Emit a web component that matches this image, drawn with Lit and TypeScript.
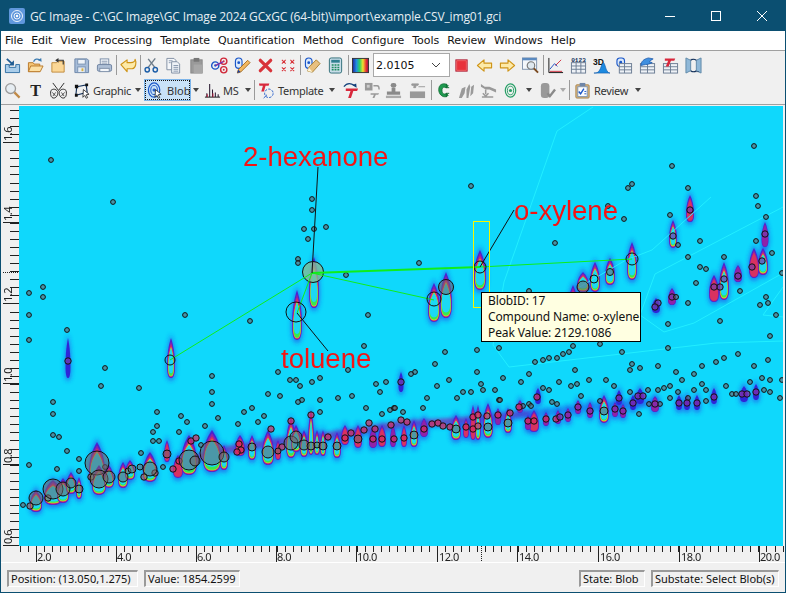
import { LitElement, html, css, svg } from 'lit';
import { customElement } from 'lit/decorators.js';

const pairs = (s: string) => {
  const n = s.trim().split(/[\s,]+/).map(Number);
  const out: number[][] = [];
  for (let i = 0; i < n.length; i += 2) out.push([n[i], n[i + 1]]);
  return out;
};

// small peak markers, page coordinates
const SMALL = pairs(`51,160 113,202 312,199 312,210 304,229 314,229 326,227 308,239 298,259 298,263 346,275 43,287 29,293 43,297 29,315 185,315 250,321 368,315 67,330 29,340 364,346 105,368 348,370 278,372 212,376 290,380 296,380 312,382 320,378 101,386 300,386 139,388 376,384 386,382 380,392 212,392 268,394 280,396 338,398 352,396 302,400 320,400 298,402
754,146 672,166 471,186 632,184 628,188 688,188 756,196 758,206 608,206 670,215 624,219 766,217 555,243 700,241 756,241 678,245 419,263 772,253 688,257 724,257 700,267 706,269 782,273 696,283 740,291 529,291 766,297 688,303 768,303 760,305 776,315 668,324 720,321 770,336 600,344 573,346 569,352 563,354 499,348 477,350 445,352 557,358 549,358 543,360 535,362 435,364 622,352 668,348 738,354 768,360 724,358 716,362 702,366 632,364 630,370 640,368 658,366 754,366 575,370 676,372 694,374 415,372 411,374 477,372 529,374 503,378 449,380 521,382 559,382 589,380 606,380 682,380 762,378 770,380 750,382 782,380 437,386 481,384 571,386 577,384 614,386 670,386 664,388 702,384 726,386 658,390 543,388 549,390 483,390 463,392 471,392 495,390 630,392 648,390 678,392 694,390 706,390 764,390 770,392 581,396 427,398 457,398 499,400 670,398 688,398 732,394 736,394 780,398
53,402 53,414 53,435 59,437 67,451 29,465 57,469 79,459 79,471 23,505 212,404 157,412 181,416 218,418 244,412 252,408 187,422 157,426 153,432 179,432 205,426 238,424 258,422 264,416 153,441 159,441 141,453 201,445 163,467 105,467 320,412 366,408 382,414 390,410 394,408 403,412 423,408 395,408 500,400 523,406 529,404 531,406 552,402 557,404 600,401 649,404 660,404 706,401 639,414`);

// markers sitting on a peak, drawn a little bigger
const MID = pairs(`68,361 401,382 537,397 619,398 638,396 643,396 714,397 742,394 747,394 756,392 519,407 578,407 590,411 633,403 655,404 679,403 687,403 697,403 401,420 407,422 432,424 438,423 443,426 450,427 466,427 473,429 478,426 473,417 478,415 487,416 498,415 510,413 528,421 534,421 546,419 556,419 560,417 568,415 615,409 623,411 394,439 404,438 424,429 271,429 291,421 311,415 369,423 375,429 364,430 351,433 328,437 345,438 373,439 382,439 191,441 196,438 239,444 241,450 237,452 282,447 179,461 173,469 155,473 48,498 30,506 91,477 144,477 391,425 690,210 765,234 738,276 672,297 658,303 655,307 752,267 762,261 724,279 720,287 714,287 673,236`);

// x, y, r
const BIG = [[36,498,7],[53,489,10],[63,489,7],[71,483,5],[79,489,4],[97,463,12],[99,479,9],[109,477,6],[123,477,5],[128,471,3],[132,469,4],[140,467,3],[150,469,7],[167,454,4],[189,460,10],[195,461,5],[212,453,12],[224,457,5],[252,447,4],[268,452,6],[278,451,3],[291,443,7],[296,437,6],[304,445,5],[311,446,4],[317,445,3],[323,446,4],[337,446,4],[358,439,4],[456,429,4],[488,427,4],[508,423,4],[414,435,4],[604,411,4],[446,287,7.5],[583,287,6],[610,272,3.5],[676,297,2.5]];
const RINGS = [[296,312,10],[170,360,5],[434,299,7],[480,267,6],[594,279,4],[632,259,6]];

// x, top, bottom, half width, level (0 blue .. 3 saturated)
const PEAKS = [[68,338,378,2.5,0],[171,338,378,4,3],[297,290,340,5,3],[314,257,308,5,3],[434,283,322,6,3],[446,272,318,6,3],[480,250,290,6,3],[573,285,320,5,3],[583,272,292,6,3],[595,262,292,5,3],[610,258,285,5,3],[632,242,280,5,3],[673,220,248,4,3],[690,195,222,4,2],[765,222,247,3.5,1],[754,248,278,5,2],[763,248,275,5,3],[724,262,300,5,3],[714,275,302,5,2],[738,265,282,4,1],[672,288,305,4,1],[656,298,313,4,0],
[36,490,512,6,3],[53,480,505,9,3],[63,478,503,6,3],[71,472,494,5,3],[79,477,499,3,3],[97,442,485,8,3],[99,465,495,7,3],[109,465,488,5,3],[123,462,488,5,3],[130,460,480,5,3],[150,452,482,7,3],[167,440,462,3,2],[178,455,478,5,2],[189,435,475,8,3],[212,430,472,9,3],[224,445,470,4,3],[240,435,456,5,2],[252,435,460,4,3],[268,430,465,6,3],[278,440,460,3,2],[291,418,458,5,3],[296,425,452,5,3],[304,430,457,4,3],[311,410,455,3,3],[317,430,455,3,3],[323,430,456,3,3],[337,432,458,4,3],[345,425,445,4,2],[358,425,448,4,2],[373,428,448,4,1],[382,425,447,4,2],[393,425,447,3,1],[404,425,447,3,2],[414,420,447,4,3],[424,418,437,4,1],[456,415,440,5,3],[466,418,438,3,2],[473,405,440,3,2],[478,405,440,3,3],[488,403,438,5,3],[498,408,425,3,1],[508,408,433,4,3],[534,410,432,5,2],[604,395,423,5,3],[528,415,430,3,1],[546,412,426,3,1],[558,410,424,3,1],[568,408,422,3,1],[615,402,417,3,1],[623,404,418,3,1],[590,402,418,3,1],[578,400,414,3,1],[520,400,413,3,1],[633,395,410,3,0],[655,396,412,4,1],[679,395,410,3,0],[687,395,410,3,0],[697,395,410,3,0],[538,388,404,3,0],[619,390,405,3,0],[640,388,404,4,0],[714,388,404,3,0],[744,386,402,4,0],[756,384,400,3,0],[401,372,392,2.5,0]];

const drop = (x: number, t: number, b: number, r: number) => {
  const h = b - t;
  return `M${x} ${t}C${x + r * 0.6} ${t + h * 0.18} ${x + r} ${t + h * 0.4} ${x + r} ${t + h * 0.7}C${x + r} ${b - h * 0.06} ${x + r * 0.55} ${b} ${x} ${b}C${x - r * 0.55} ${b} ${x - r} ${b - h * 0.06} ${x - r} ${t + h * 0.7}C${x - r} ${t + h * 0.4} ${x - r * 0.6} ${t + h * 0.18} ${x} ${t}Z`;
};

const range = (from: number, to: number, step: number) => {
  const out: number[] = [];
  for (let v = from; v <= to; v += step) out.push(v);
  return out;
};

const midFill = (x: number, y: number) => {
  if (y < 390) return 'rgba(120,60,170,.7)';
  if (x >= 170 && x < 560) return 'rgba(215,45,95,.72)';
  if (x < 170) return 'rgba(170,90,80,.6)';
  return 'rgba(135,45,170,.72)';
};

const ICONS: Record<string, unknown> = {
  import: svg`<path d="M1.5 8v8.5h15V8h-4v3h-7V8z" fill="#a9cdea" stroke="#2f6ea3"/><path d="M3 2l6 5.5" stroke="#1f5c92" stroke-width="2" fill="none"/><path d="M10.5 3.5v5.5H5z" fill="#1f5c92"/>`,
  open: svg`<path d="M1.5 15.5V6h5l1 1.5h6v8z" fill="#f5c676" stroke="#b9792a"/><path d="M1.5 15.5L4 9.5h13l-3 6z" fill="#fde0a3" stroke="#b9792a"/><path d="M7 5C8 2 11 1.5 13.5 3" fill="none" stroke="#3a7ab0" stroke-width="1.3"/><path d="M15.5 5l-.5-4-3.5 2.5z" fill="#3a7ab0"/>`,
  upfolder: svg`<path d="M2 16V6h5l1-1.5h7V16z" fill="#fbd796" stroke="#c08a3a"/><path d="M14 8V3.5H8" fill="none" stroke="#333" stroke-width="1.2"/><path d="M9 1L5.5 3.5 9 6z" fill="#333"/>`,
  save: svg`<path d="M2 2h13l1.5 1.5V16.500H2z" fill="#a6bcd8" stroke="#6b85a8"/><rect x="5" y="2.500" width="8" height="5" fill="#eef3f8" stroke="#7a93b3"/><rect x="5" y="10.500" width="8" height="6" fill="#e6edf5" stroke="#7a93b3"/><rect x="9" y="12" width="2" height="3" fill="#d8b040"/>`,
  print: svg`<rect x="4.500" y="2" width="9" height="7" fill="#eef2f7" stroke="#7d8fa8"/><rect x="1.500" y="8" width="15" height="7" rx="1.500" fill="#aebfd6" stroke="#6d82a0"/><rect x="4" y="12" width="10" height="3.500" fill="#f3f6fa" stroke="#7d8fa8"/><path d="M6 4.500h6M6 6.500h6" stroke="#8a9ab0"/>`,
  undo: svg`<path d="M1 8l6.500-5v3h4c3 0 4.500-2 4.500-3.500 1.500 3 1 9-3 10H7.500v3z" fill="#fdeaa8" stroke="#cf9417" stroke-width="1.2" stroke-linejoin="round"/>`,
  scissors: svg`<path d="M14.500 1.500L7 11M7 2l7 9" stroke="#6f7d8a" stroke-width="1.500" fill="none" transform="translate(-1.500 0)"/><circle cx="4.500" cy="13.500" r="2.300" fill="none" stroke="#1e5fa8" stroke-width="1.500"/><circle cx="13" cy="13.500" r="2.300" fill="none" stroke="#1e5fa8" stroke-width="1.500"/>`,
  copy: svg`<path d="M2 1.500h7.500l2 2v10H2z" fill="#f5f7fa" stroke="#7f8ea3"/><path d="M7 5h6l2.500 2.500v9.500H7z" fill="#eef2f7" stroke="#7f8ea3"/><path d="M4 4h4M4 6h2M9 9h5M9 11h5M9 13h5M9 15h5" stroke="#8797ad"/>`,
  paste: svg`<rect x="3" y="3" width="12" height="14" fill="#9a9a9a" stroke="#888"/><rect x="6" y="1" width="6" height="4" fill="#777"/><rect x="6" y="8" width="9" height="9" fill="#a8a8a8"/>`,
  blobs: svg`<g fill="none"><circle cx="4.500" cy="9" r="3.800" stroke="#1a56c8" stroke-width="1.500"/><circle cx="4.500" cy="9" r="1.200" fill="#1a56c8"/><circle cx="13.500" cy="4.500" r="3.300" stroke="#d0283a" stroke-width="1.500"/><circle cx="13.500" cy="4.500" r="1" fill="#d0283a"/><circle cx="13.500" cy="13.500" r="3.300" stroke="#d0283a" stroke-width="1.500"/><circle cx="13.500" cy="13.500" r="1" fill="#d0283a"/><path d="M5 9l8-4" stroke="#8030a8" stroke-width="1.500"/></g>`,
  blobpen: svg`<rect x="1.500" y="1" width="7" height="11" rx="3.500" fill="#dbe9fa" stroke="#1a56c8" stroke-width="1.200"/><circle cx="5" cy="6" r="1.500" fill="#1a56c8"/><path d="M14.500 3.500l2.500 2.500L7 16l-3.500 1L4.500 13.500z" fill="#f3b860" stroke="#a86f20"/><path d="M3.500 17l1-3.500 2.500 2.500z" fill="#1a3fa0"/>`,
  redx: svg`<path d="M3.500 3.500l11 11M14.500 3.500l-11 11" stroke="#d8333a" stroke-width="3.400" stroke-linecap="round"/>`,
  xs: svg`<path d="M2 3l4 4M6 3L2 7M11 3l4 4M15 3l-4 4M2 11l4 4M6 11l-4 4M11 11l4 4M15 11l-4 4" stroke="#d8333a" stroke-width="1.100"/>`,
  pin: svg`<rect x="1.500" y="1" width="7" height="11" rx="3.500" fill="#dbe9fa" stroke="#1a56c8" stroke-width="1.200"/><circle cx="5" cy="6" r="1.500" fill="#1a56c8"/><path d="M13 3l4 4-8 9-5-1 1-4z" fill="#e8c080" stroke="#a87f30"/><path d="M4 15l1-4 4 5z" fill="#fff6d8"/>`,
  calc: svg`<rect x="2.500" y="1" width="13" height="16" rx="2" fill="#c8dde8" stroke="#2f6d78"/><rect x="4.500" y="3" width="9" height="3" fill="#2f7f90"/><path d="M5 8.500h2M8 8.500h2M11 8.500h2M5 11h2M8 11h2M11 11h2M5 13.500h2M8 13.500h2M11 13.500h2" stroke="#1f8a60" stroke-width="1.600"/>`,
  colorbar: svg`<defs><linearGradient id="rb"><stop offset="0" stop-color="#2020a0"/><stop offset=".25" stop-color="#2090e0"/><stop offset=".45" stop-color="#30d060"/><stop offset=".65" stop-color="#f0e030"/><stop offset=".85" stop-color="#e83030"/><stop offset="1" stop-color="#901050"/></linearGradient></defs><rect x=".500" y="1.500" width="17" height="15" fill="url(#rb)" stroke="#333"/>`,
  stop: svg`<rect x="3" y="3" width="12" height="12" fill="#e8323c" stroke="#b02a40"/><rect x="4" y="4" width="10" height="10" fill="none" stroke="#f47a7a" stroke-width=".7"/>`,
  left: svg`<path d="M1.500 9l7-6v3.500h8v5h-8V15z" fill="#fdeaa8" stroke="#cf9417" stroke-width="1.200" stroke-linejoin="round"/>`,
  right: svg`<path d="M16.500 9l-7-6v3.500h-8v5h8V15z" fill="#fdeaa8" stroke="#cf9417" stroke-width="1.200" stroke-linejoin="round"/>`,
  winmag: svg`<rect x=".500" y="1" width="15" height="12" fill="#f4f7fb" stroke="#7f93ad"/><rect x=".500" y="1" width="15" height="2.500" fill="#5b8ac0"/><circle cx="9.500" cy="9" r="4" fill="#dfe8ef" stroke="#777" stroke-width="1.200"/><path d="M12.500 12l4.500 4.500" stroke="#7a4a20" stroke-width="2"/>`,
  chart: svg`<path d="M2 1v15.500h15" stroke="#111" fill="none"/><path d="M3 13l5-6 3 3" stroke="#2050c0" fill="none"/><path d="M9 9l6-6" stroke="#d03040" fill="none"/><path d="M3 15.200h13" stroke="#d03040" fill="none"/>`,
  table0123: svg`<text x="9" y="5.800" text-anchor="middle" font-size="6.500" font-weight="700" font-family="'Liberation Mono',monospace" fill="#12305a">0123</text><rect x="1.500" y="6" width="15" height="11" fill="#eef2f7" stroke="#6b7c93"/><path d="M1.500 9.500h15M1.500 13h15M6.500 6v11M11.500 6v11" stroke="#6b7c93"/>`,
  threed: svg`<text x="0" y="8" font-size="9" font-weight="700" font-family="'Liberation Sans',sans-serif" fill="#111">3D</text><path d="M1 17c4 0 5-1 7-5 1-3 2-6 3-6s2 4 3 7c1 2 2 4 4 4z" fill="#1d8ae0" stroke="#0f5cb0" stroke-width=".7"/>`,
  tableblob: svg`<rect x="1" y="1" width="8" height="9" rx="3" fill="#dbe9fa" stroke="#1a56c8" stroke-width="1.200"/><circle cx="5" cy="5.500" r="1.500" fill="#1a56c8"/><rect x="3.500" y="7" width="13" height="10" fill="#eef2f7" stroke="#6b7c93"/><path d="M3.500 10.300h13M3.500 13.600h13M9 7v10" stroke="#6b7c93"/>`,
  tablecloud: svg`<rect x="1.500" y="7" width="15" height="10" fill="#eef2f7" stroke="#6b7c93"/><path d="M1.500 10.300h15M1.500 13.600h15M9 7v10" stroke="#6b7c93"/><path d="M2 9c0-4 3-7 8-8l5 1c-2 1-3 2-4 3l3 1c-2 1-5 2-7 2-2 0-3 1-5 1z" fill="#3f8fe0" stroke="#1a56a8" stroke-width=".8"/>`,
  tablet: svg`<rect x="1.500" y="7" width="15" height="10" fill="#eef2f7" stroke="#6b7c93"/><path d="M1.500 10.300h15M1.500 13.600h15M9 7v10" stroke="#6b7c93"/><path d="M3 1.500h11l-1 2.500H9.500L7 10H4l2.500-6H3z" fill="#d8283c"/>`,
  reflect: svg`<path d="M1 1l5 2.500v11L1 17z" fill="#8fb8d8" stroke="#5f88a8"/><path d="M17 1l-5 2.500v11L17 17z" fill="#8fb8d8" stroke="#5f88a8"/><path d="M6 3.500c2 -1.500 4 -1.500 6 0M12 14.500c-2 1.500-4 1.500-6 0" fill="none" stroke="#12305a" stroke-width="1.200"/><path d="M9 15.500h6M9 2.500h-3" stroke="#12305a" stroke-width=".6"/>`,
  mag: svg`<circle cx="7" cy="7" r="5.200" fill="#e6edf2" stroke="#9a9a9a" stroke-width="1.400"/><path d="M11 11l5.500 5.500" stroke="#c08a48" stroke-width="2.400"/>`,
  bigt: svg`<text x="9" y="15" text-anchor="middle" font-size="17" font-weight="700" font-family="'Liberation Serif',serif" fill="#222">T</text>`,
  fish: svg`<g fill="none" stroke="#111" stroke-width=".9"><path d="M3 1l6 8 6-8M1 9c2-2 5-2 7 1 1 3-1 7-4 7S0 13 1 9zM17 9c-2-2-5-2-7 1-1 3 1 7 4 7s4-4 3-8z"/><path d="M2.500 11l3.500 4M6 11l-3 4M12 11l3 4M15.500 11l-3.500 4" stroke-width=".7"/></g>`,
  graphic: svg`<path d="M4 5l10-2 1 8-12 3z" fill="none" stroke="#12305a" stroke-width="1.200"/><path d="M2 3h3.500v3.500H2zM2 12.500h3v3H2zM13 1.500h3v3h-3z" fill="#111"/><path d="M11 8l6 5-3 .5 1.500 3-1.500.7-1.500-3-2 2z" fill="#fff" stroke="#111" stroke-width=".8"/>`,
  blob: svg`<g fill="none" stroke="#1a56c8"><ellipse cx="7.500" cy="8.500" rx="6" ry="7.500" stroke-width="1.300"/><ellipse cx="7.500" cy="8.500" rx="3.500" ry="4.800"/><circle cx="7.500" cy="8.500" r="1.200" fill="#1a56c8"/></g><path d="M9 8l6 5-3 .5 1.500 3-1.500.7-1.500-3-2 2z" fill="#fff" stroke="#111" stroke-width=".8"/>`,
  ms: svg`<path d="M1 16h16" stroke="#111"/><path d="M3 16v-4M6 16V2M9 16V8M12 16v-5M15 16v-3" stroke="#2a1a30" stroke-width="1.100"/><path d="M3.500 16V13M9.500 16v-4" stroke="#c02040"/>`,
  templ: svg`<path d="M1 1.500h11l-.8 2.500H8L6.300 10H3.500l1.700-6H1.500z" fill="#d8283c"/><circle cx="11.500" cy="12" r="4.500" fill="none" stroke="#1a56c8" stroke-dasharray="2.500 1.500"/><path d="M6 17l3.500-3.500" stroke="#1a56c8"/>`,
  tarrow: svg`<path d="M4 7h13l-1 2.500h-4L9.500 17H6.500L9 9.500H4z" fill="#d8283c"/><path d="M2 5C5 1 9 1 13 3.500" fill="none" stroke="#12407a" stroke-width="1.300"/><path d="M15.500 6l-.5-4.500-4 2z" fill="#12407a"/>`,
  gtool: svg`<rect x="1" y="1" width="8" height="8" fill="#999"/><rect x="3" y="3" width="3" height="3" fill="#ccc"/><path d="M10 4h4c2 0 2 2 2 4" fill="none" stroke="#999" stroke-width="1.500"/><path d="M7 12h9l-1 1.500h-2.500L11 17H9l1.500-3.500H7z" fill="#999"/>`,
  stamp: svg`<rect x="6" y="1" width="6" height="5" rx="2.500" fill="#8a8a8a"/><path d="M7 6h4v4h5v3.500H2V10h5z" fill="#8a8a8a"/><rect x="1" y="14.500" width="16" height="2.500" fill="#aaa"/>`,
  gflat: svg`<path d="M3 2h7l-.5 1.500H7.500L7 6H5l.5-2.500H3zM10 5h7" fill="#999" stroke="#999"/><rect x="1" y="10" width="16" height="7" fill="#999"/>`,
  greenc: svg`<path d="M14 4C12 1 6 1 4.500 5c-1.500 4 0 9 4.500 10.500 2 .5 4 0 5-1.500l-2-2c-2 1.500-4 .5-4.500-2-.5-2.500 .5-5 3-4.500 1 .3 1.500 1 1.500 1z" fill="#1f9a50" stroke="#0f6a30" stroke-width=".8"/><path d="M12 2v4h3M12 16v-4h3" fill="none" stroke="#0f6a30"/>`,
  gslash: svg`<path d="M1 17l3-10 4-2-1 7-3 5zM9 17V8l3-6 1 3-2 12zM13 15l1-10 3-2-1 9z" fill="#9a9a9a"/>`,
  garm: svg`<path d="M1 2l4 3h5l7 3v3l-7-3H6L1 5z" fill="#999"/><path d="M6 8v5M2 16h12M3 12l3 3 3-3" fill="none" stroke="#999" stroke-width="1.600"/>`,
  target: svg`<g fill="none" stroke="#28a068"><ellipse cx="9" cy="9" rx="5.500" ry="7" stroke-width="1.300"/><ellipse cx="9" cy="9" rx="3.300" ry="4.500"/></g><circle cx="9" cy="9" r="1.700" fill="#28a068"/>`,
  gcyl: svg`<rect x="2" y="1" width="9" height="16" rx="3.500" fill="#999"/><path d="M9 12l2.500 3L17 8" fill="none" stroke="#8a8a8a" stroke-width="2.500"/>`,
  clip: svg`<rect x="2" y="3" width="14" height="14" rx="1" fill="#d8b888" stroke="#a88248"/><rect x="4" y="5" width="10" height="10.500" fill="#fafcff" stroke="#7f93ad"/><rect x="6" y="1" width="6" height="3.500" fill="#6f86a8"/><path d="M5 10l2 2.500L10.500 7" fill="none" stroke="#1a56c8" stroke-width="1.500"/><path d="M11 10h2M11 12.500h2" stroke="#1a56c8"/>`,
};

type Tool = { i?: string; w?: number; sep?: number; label?: string; arrow?: boolean; off?: boolean };

const ROW1: Tool[] = [
  { i: 'import' }, { i: 'open' }, { i: 'upfolder' }, { i: 'save' }, { i: 'print' }, { sep: 1 },
  { i: 'undo' }, { sep: 1 },
  { i: 'scissors', w: 21 }, { i: 'copy' }, { i: 'paste' }, { i: 'blobs' }, { i: 'blobpen' }, { i: 'redx' }, { i: 'xs' }, { sep: 1 },
  { i: 'pin' }, { i: 'calc' }, { sep: 2 }, { i: 'colorbar' },
];
const ROW1B: Tool[] = [
  { i: 'stop' }, { i: 'left' }, { i: 'right' }, { i: 'winmag' }, { sep: 2 },
  { i: 'chart' }, { i: 'table0123' }, { i: 'threed' }, { i: 'tableblob' }, { i: 'tablecloud' }, { i: 'tablet' }, { i: 'reflect' },
];
const ROW2A: Tool[] = [
  { i: 'mag' }, { i: 'bigt' }, { i: 'fish' }, { i: 'graphic' }, { label: 'Graphic', w: 38 }, { arrow: true, w: 13 },
];
const ROW2B: Tool[] = [
  { arrow: true, w: 10 }, { i: 'ms', w: 22 }, { label: 'MS', w: 19 }, { arrow: true, w: 12 }, { sep: 1 },
  { i: 'templ' }, { label: 'Template', w: 48 }, { arrow: true, w: 12 },
  { i: 'tarrow', w: 24 }, { i: 'gtool', w: 21 }, { i: 'stamp', w: 21 }, { i: 'gflat', w: 27 }, { sep: 1 },
  { i: 'greenc' }, { i: 'gslash' }, { i: 'garm', w: 21 }, { i: 'target' }, { arrow: true, w: 14 },
  { i: 'gcyl', w: 22 }, { arrow: true, w: 10, off: true }, { sep: 2 },
  { i: 'clip', w: 24 }, { label: 'Review', w: 38 }, { arrow: true, w: 12 },
];
const MENU = ['File', 'Edit', 'View', 'Processing', 'Template', 'Quantification', 'Method', 'Configure', 'Tools', 'Review', 'Windows', 'Help'];

@customElement('app-root')
export class AppRoot extends LitElement {
  static styles = css`
    :host {
      display: block;
      box-sizing: border-box;
      width: 786px;
      height: 593px;
      border: 1px solid #0b4f71;
      background: #f0f0f0;
      font: 11px 'DejaVu Sans', sans-serif;
      color: #111;
      overflow: hidden;
    }
    .title {
      display: flex;
      align-items: center;
      height: 30px;
      background: #0b4f71;
      color: #e6eef3;
      font: 12px 'Open Sans', sans-serif;
      letter-spacing: -0.15px;
    }
    .logo { width: 16px; height: 16px; margin: 0 5px 0 8px; }
    .title-text { flex: 1; white-space: nowrap; }
    .win-btn { width: 46px; display: flex; justify-content: center; }
    .menu {
      display: flex;
      align-items: center;
      gap: 8px;
      height: 19px;
      padding-left: 4px;
      background: #fff;
      border-bottom: 1px solid #a0a0a0;
      letter-spacing: -0.06px;
    }
    .row { box-sizing: border-box; display: flex; align-items: center; height: 27px; padding-top: 1px; }
    .row.second { border-bottom: 1px solid #a0a0a0; height: 27px; padding: 0 0 2px; }
    .cell { display: flex; align-items: center; justify-content: center; width: 23px; flex: none; }
    .cell svg { width: 17px; height: 17px; flex: none; overflow: visible; }
    .sep { align-self: center; height: 20px; flex: none; display: flex; justify-content: center; }
    .sep i { width: 1px; background: #9a9a9a; }
    .label { flex: none; white-space: nowrap; color: #333; font: 11px 'Noto Sans', sans-serif; letter-spacing: -0.3px; }
    .arrow { flex: none; display: flex; justify-content: center; }
    .arrow i { border: 3.5px solid transparent; border-top: 4px solid #444; border-bottom: 0; }
    .arrow.off i { border-top-color: #aaa; }
    .combo {
      box-sizing: border-box;
      width: 77px;
      height: 24px;
      margin-left: 1px;
      flex: none;
      display: flex;
      align-items: center;
      justify-content: space-between;
      padding: 0 8px 0 2px;
      background: #fff;
      border: 1px solid #a8a8a8;
    }
    .active {
      box-sizing: border-box;
      width: 47px;
      height: 22px;
      flex: none;
      display: flex;
      align-items: center;
      gap: 3px;
      padding-left: 1px;
      background: #c9e2f8;
      border: 1px solid #7fb6ea;
      outline: 1px dotted #111;
      outline-offset: -2px;
      font: 11px 'Noto Sans', sans-serif;
      color: #333;
    }
    .chart { position: relative; height: 457px; }
    .chart > svg { display: block; overflow: visible; }
    .axis-label { font: 11px 'Noto Sans', sans-serif; fill: #222; letter-spacing: -0.5px; }
    .name { font: 27.5px 'Liberation Sans', sans-serif; fill: #f41414; }
    .tip {
      position: absolute;
      left: 480px;
      top: 187px;
      box-sizing: border-box;
      width: 160px;
      height: 50px;
      padding: 0 0 0 6px;
      background: #ffffe1;
      border: 1px solid #000;
      font: 12px/16px 'Noto Sans', sans-serif;
      letter-spacing: -0.12px;
      white-space: nowrap;
    }
    .status {
      box-sizing: border-box;
      height: 30px;
      display: flex;
      gap: 6px;
      padding: 7px 6px 0 6px;
      border-top: 1px solid #fff;
      font: 11px 'Noto Sans', sans-serif;
    }
    .panel {
      box-sizing: border-box;
      height: 17px;
      padding-left: 2px;
      border: 1px solid #fff;
      border-top: 2px solid #9a9a9a;
      border-left: 2px solid #9a9a9a;
      line-height: 13px;
      white-space: nowrap;
    }
    .spacer { flex: 1; }
  `;

  private icon(name: string) {
    return html`<svg viewBox="0 0 18 18">${ICONS[name]}</svg>`;
  }

  private tools(list: Tool[]) {
    return list.map((t) => {
      if (t.sep) return html`<div class="sep" style="width:${t.sep}px"><i></i></div>`;
      if (t.arrow) return html`<div class="arrow ${t.off ? 'off' : ''}" style="width:${t.w}px"><i></i></div>`;
      if (t.label) return html`<div class="label" style="width:${t.w}px">${t.label}</div>`;
      return html`<div class="cell" style="width:${t.w ?? 23}px">${this.icon(t.i!)}</div>`;
    });
  }

  private plot() {
    return svg`
      <defs>
        <filter id="halo" x="-50%" y="-50%" width="200%" height="200%"><feGaussianBlur stdDeviation="2"/></filter>
        <filter id="soft" x="-50%" y="-50%" width="200%" height="200%"><feGaussianBlur stdDeviation=".35"/></filter>
        <filter id="band" x="-5%" y="-50%" width="110%" height="200%"><feGaussianBlur stdDeviation="2.2"/></filter>
        <linearGradient id="ridge" gradientUnits="userSpaceOnUse" x1="175" y1="0" x2="600" y2="0">
          <stop offset="0" stop-color="#9a22a8"/><stop offset=".7" stop-color="#8a28b0"/><stop offset="1" stop-color="#3a38e0"/>
        </linearGradient>
        <clipPath id="area"><rect x="19" y="106" width="764" height="440"/></clipPath>
      </defs>
      <rect x="19" y="106" width="764" height="440" fill="#0fd8fc"/>
      <g clip-path="url(#area)">
        <path d="M180 462L230 450 290 440 340 436 400 426 470 422 530 414 600 406 660 402" fill="none" stroke="#1c4ae8" stroke-width="8" opacity=".45" filter="url(#band)"/>
        <path d="M180 462L230 449 290 440 345 433 400 424 470 420 530 413" fill="none" stroke="url(#ridge)" stroke-width="5" opacity=".75" filter="url(#band)"/>
        <g filter="url(#halo)">
          ${PEAKS.map(([x, t, b, r]) => svg`<path d=${drop(x, t - 4, b + 3, r + 1)} fill="#2638e6" opacity=".55"/>`)}
        </g>
        <g filter="url(#soft)">
          ${PEAKS.map(([x, t, b, r, l]) => {
            const h = b - t;
            return svg`
              <path d=${drop(x, t, b, r)} fill=${l === 0 ? '#2f28d8' : '#4a24d0'}/>
              ${l >= 1 ? svg`<path d=${drop(x, t + h * 0.08, b - 0.6, r - 0.5)} fill="#9020a8"/>` : ''}
              ${l >= 2 ? svg`<path d=${drop(x, t + h * 0.15, b - 1.1, Math.max(r - 0.9, 0.8))} fill="#d83060"/>` : ''}
              ${l >= 3 ? svg`<path d=${drop(x, t + h * 0.22, b - 1.7, Math.max(r - 1.2, 0.8))} fill="#e8d820"/>
                <path d=${drop(x, t + h * 0.25, b - 2.3, Math.max(r - 1.5, 0.7))} fill="#38e850"/>
                <path d=${drop(x, t + h * 0.25, b - Math.max(3.5, h * 0.12), Math.max(r - 1.8, 0.6))} fill="#1cd8f4"/>` : ''}
            `;
          })}
        </g>
        <g fill="none" stroke="#22eeff" stroke-width="1">
          <polyline points="593,107 557,131 504,282 493,345 509,367 716,343 783,341"/>
          <polyline points="711,197 652,250 626,260 578,288"/>
          <polyline points="783,207 655,274 640,315 664,332 694,323 783,273"/>
          <polyline points="783,287 763,315 783,317"/>
        </g>
        <g stroke="#111" fill="rgba(105,105,115,.62)">
          ${SMALL.map(([x, y]) => svg`<circle cx=${x} cy=${y} r="2.4"/>`)}
        </g>
        <g stroke="#111">
          ${MID.map(([x, y]) => svg`<circle cx=${x} cy=${y} r="3.2" fill=${midFill(x, y)}/>`)}
        </g>
        <g stroke="#111" fill="rgba(115,100,105,.55)">
          ${BIG.map(([x, y, r]) => svg`<circle cx=${x} cy=${y} r=${r}/>`)}
        </g>
        <circle cx="313" cy="272" r="10.500" fill="rgba(130,190,150,.8)" stroke="#111"/>
        <g stroke="#0fee1a" fill="none">
          <path d="M312 273L170 360M312 273L297 313M312 273L434 300"/>
          <path d="M312 273L480 267" stroke-width="2"/>
          <path d="M480 267L632 259"/>
        </g>
        <g stroke="#111" fill="none">
          ${RINGS.map(([x, y, r]) => svg`<circle cx=${x} cy=${y} r=${r}/>`)}
          <path d="M318 167L312 273M297 313L328 351M514 210L480 267"/>
        </g>
        <rect x="473.500" y="221.500" width="16" height="86" fill="none" stroke="#f6f600"/>
        <text class="name" x="243" y="166">2-hexanone</text>
        <text class="name" x="281" y="368">toluene</text>
        <text class="name" x="514" y="220">o-xylene</text>
      </g>
      <g stroke="#222">
        ${range(110, 546, 8.06).map((y) => svg`<path d="M10 ${Math.round(y) + 0.5}H19"/>`)}
        ${[142, 222, 303, 383, 464, 545].map((y) => svg`<path d="M3 ${y + 0.5}H19"/>`)}
        ${range(19.7, 783, 8.03).map((x) => svg`<path d="M${Math.round(x) + 0.5} 546V552"/>`)}
        ${[36, 116, 196, 276, 356, 437, 517, 598, 679, 759].map((x) => svg`<path d="M${x + 0.5} 546V562"/>`)}
        <path d="M3 272.500H19M481.500 546V562" stroke-dasharray="1 1"/>
      </g>
      ${[['1.6', 141], ['1.4', 221], ['1.2', 302], ['1.0', 382], ['0.8', 463], ['0.6', 544]].map(
        ([t, y]) => svg`<text class="axis-label" transform="translate(12,${y}) rotate(-90)">${t}</text>`,
      )}
      ${[['2.0', 37], ['4.0', 117], ['6.0', 197], ['8.0', 277], ['10.0', 357], ['12.0', 439], ['14.0', 519], ['16.0', 600], ['18.0', 681], ['20.0', 760]].map(
        ([t, x]) => svg`<text class="axis-label" x=${x} y="561">${t}</text>`,
      )}
    `;
  }

  render() {
    return html`
      <div class="title">
        <svg class="logo" viewBox="0 0 16 16">
          <rect width="16" height="16" rx="2" fill="#5f97dc"/>
          <g fill="none" stroke="#eaf2fb"><circle cx="8" cy="8" r="5.500"/><circle cx="8" cy="8" r="3"/></g>
          <circle cx="8" cy="8" r="1.200" fill="#fff"/>
        </svg>
        <div class="title-text">GC Image - C:\\GC Image\\GC Image 2024 GCxGC (64-bit)\\import\\example.CSV_img01.gci</div>
        <div class="win-btn"><svg width="10" height="10" viewBox="0 0 10 10"><path d="M0 5.500H10" stroke="#fff"/></svg></div>
        <div class="win-btn"><svg width="10" height="10" viewBox="0 0 10 10"><rect x=".5" y=".5" width="9" height="9" fill="none" stroke="#fff"/></svg></div>
        <div class="win-btn"><svg width="10" height="10" viewBox="0 0 10 10"><path d="M0 0L10 10M10 0L0 10" stroke="#fff"/></svg></div>
      </div>
      <div class="menu">${MENU.map((m) => html`<span>${m}</span>`)}</div>
      <div class="row">
        ${this.tools(ROW1)}
        <div class="combo"><span>2.0105</span><svg width="10" height="6" viewBox="0 0 10 6"><path d="M1 1l4 4 4-4" fill="none" stroke="#444"/></svg></div>
        ${this.tools(ROW1B)}
      </div>
      <div class="row second">
        ${this.tools(ROW2A)}
        <div class="active"><div class="cell" style="width:18px">${this.icon('blob')}</div><span>Blob</span></div>
        ${this.tools(ROW2B)}
      </div>
      <div class="chart">
        <svg width="784" height="457" viewBox="1 105 784 457">${this.plot()}</svg>
        <div class="tip">BlobID: 17<br />Compound Name: o-xylene<br />Peak Value: 2129.1086</div>
      </div>
      <div class="status">
        <div class="panel" style="width:131px">Position: (13.050,1.275)</div>
        <div class="panel" style="width:96px">Value: 1854.2599</div>
        <div class="spacer"></div>
        <div class="panel" style="width:66px">State: Blob</div>
        <div class="panel" style="width:128px">Substate: Select Blob(s)</div>
      </div>
    `;
  }
}
